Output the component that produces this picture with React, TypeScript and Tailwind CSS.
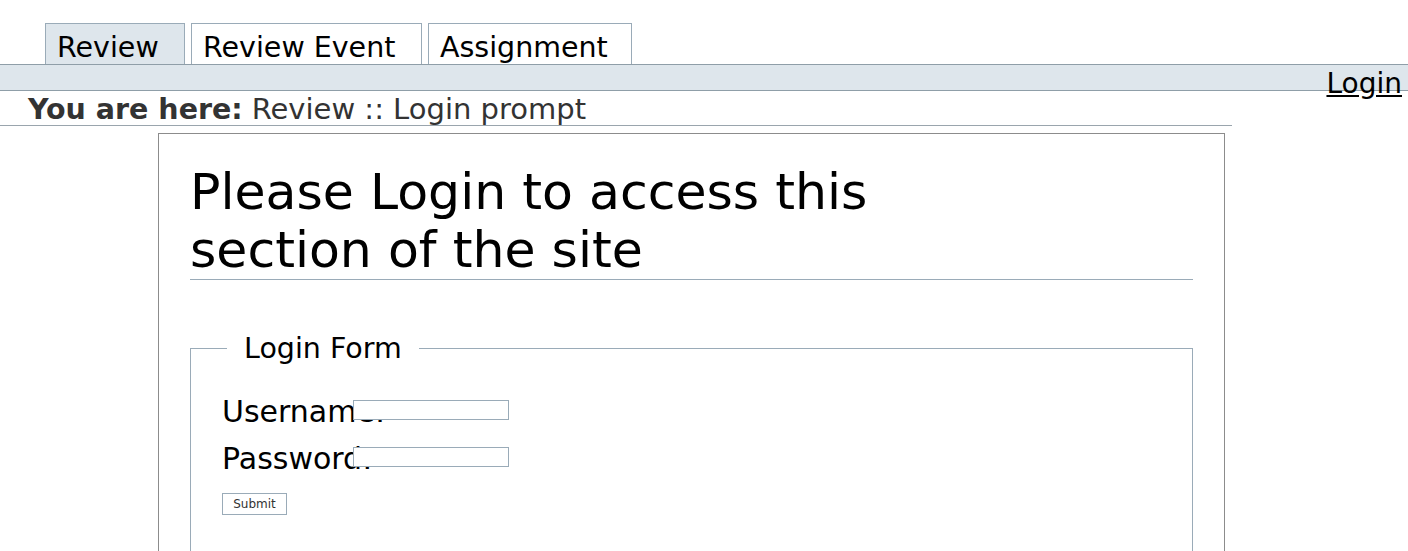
import React from "react";

export default function App() {
  const tabs = [
    { label: "Review", active: true, w: "w-[140px]" },
    { label: "Review Event", active: false, w: "w-[231px]" },
    { label: "Assignment", active: false, w: "w-[204px]" },
  ];
  return (
    <div className="min-h-[551px] w-[1408px] bg-white font-['DejaVu_Sans','Verdana',sans-serif] text-black overflow-hidden">
      {/* Tabs */}
      <div className="flex items-end gap-[6px] pl-[45px] pt-[23px]">
        {tabs.map((t) => (
          <div
            key={t.label}
            className={`h-[41px] ${t.w} border border-b-0 border-[#9aabb8] pl-[11px] pt-[7px] text-[28.5px] leading-[normal] whitespace-nowrap ${
              t.active ? "bg-[#dee6ec]" : "bg-white"
            }`}
          >
            {t.label}
          </div>
        ))}
      </div>

      {/* Bar */}
      <div className="flex h-[27px] items-start justify-end border-y border-[#8f9ea8] bg-[#dee6ec] pr-[6px]">
        <a href="#" className="pt-[2px] text-[28px] leading-[normal] text-black underline">
          Login
        </a>
      </div>

      {/* Breadcrumb */}
      <div className="h-[35px] w-[1232px] border-b border-[#9aa5ad] pl-[28px] pt-[1px] text-[28px] leading-[normal] text-[#333] whitespace-nowrap">
        <span className="font-bold text-[28.5px]">You are here:</span>{" "}
        <span className="text-[29px]">Review :: Login prompt</span>
      </div>

      {/* Main box */}
      <div className="ml-[158px] mt-[7px] w-[1067px] border border-b-0 border-[#8c8c8c] px-[31px] pt-[29px] pb-[60px]">
        <h1 className="border-b border-[#9aabb8] text-[50.5px] font-normal leading-[58px]">
          Please Login to access this
          <br />
          section of the site
        </h1>

        <fieldset className="mt-[52px] border border-[#9aabb8] pl-[31px] pt-[29px] pb-[40px]">
          <legend className="ml-[5px] px-[17px] text-[28.5px] leading-[normal]">Login Form</legend>

          <div className="flex h-[47px] items-start">
            <label className="w-[131px] shrink-0 whitespace-nowrap text-[30px] leading-[normal]">
              Username:
            </label>
            <input
              type="text"
              className="relative mt-[6px] h-[20px] w-[156px] border border-[#9aabb8] bg-white outline-none"
            />
          </div>
          <div className="flex h-[47px] items-start">
            <label className="w-[131px] shrink-0 whitespace-nowrap text-[30px] leading-[normal]">
              Password:
            </label>
            <input
              type="password"
              className="relative mt-[6px] h-[20px] w-[156px] border border-[#9aabb8] bg-white outline-none"
            />
          </div>
          <button
            type="button"
            className="mt-[5px] h-[22px] w-[65px] border border-[#9aabb8] bg-white text-[12px] leading-[normal] text-[#333]"
          >
            Submit
          </button>
        </fieldset>
      </div>
    </div>
  );
}
